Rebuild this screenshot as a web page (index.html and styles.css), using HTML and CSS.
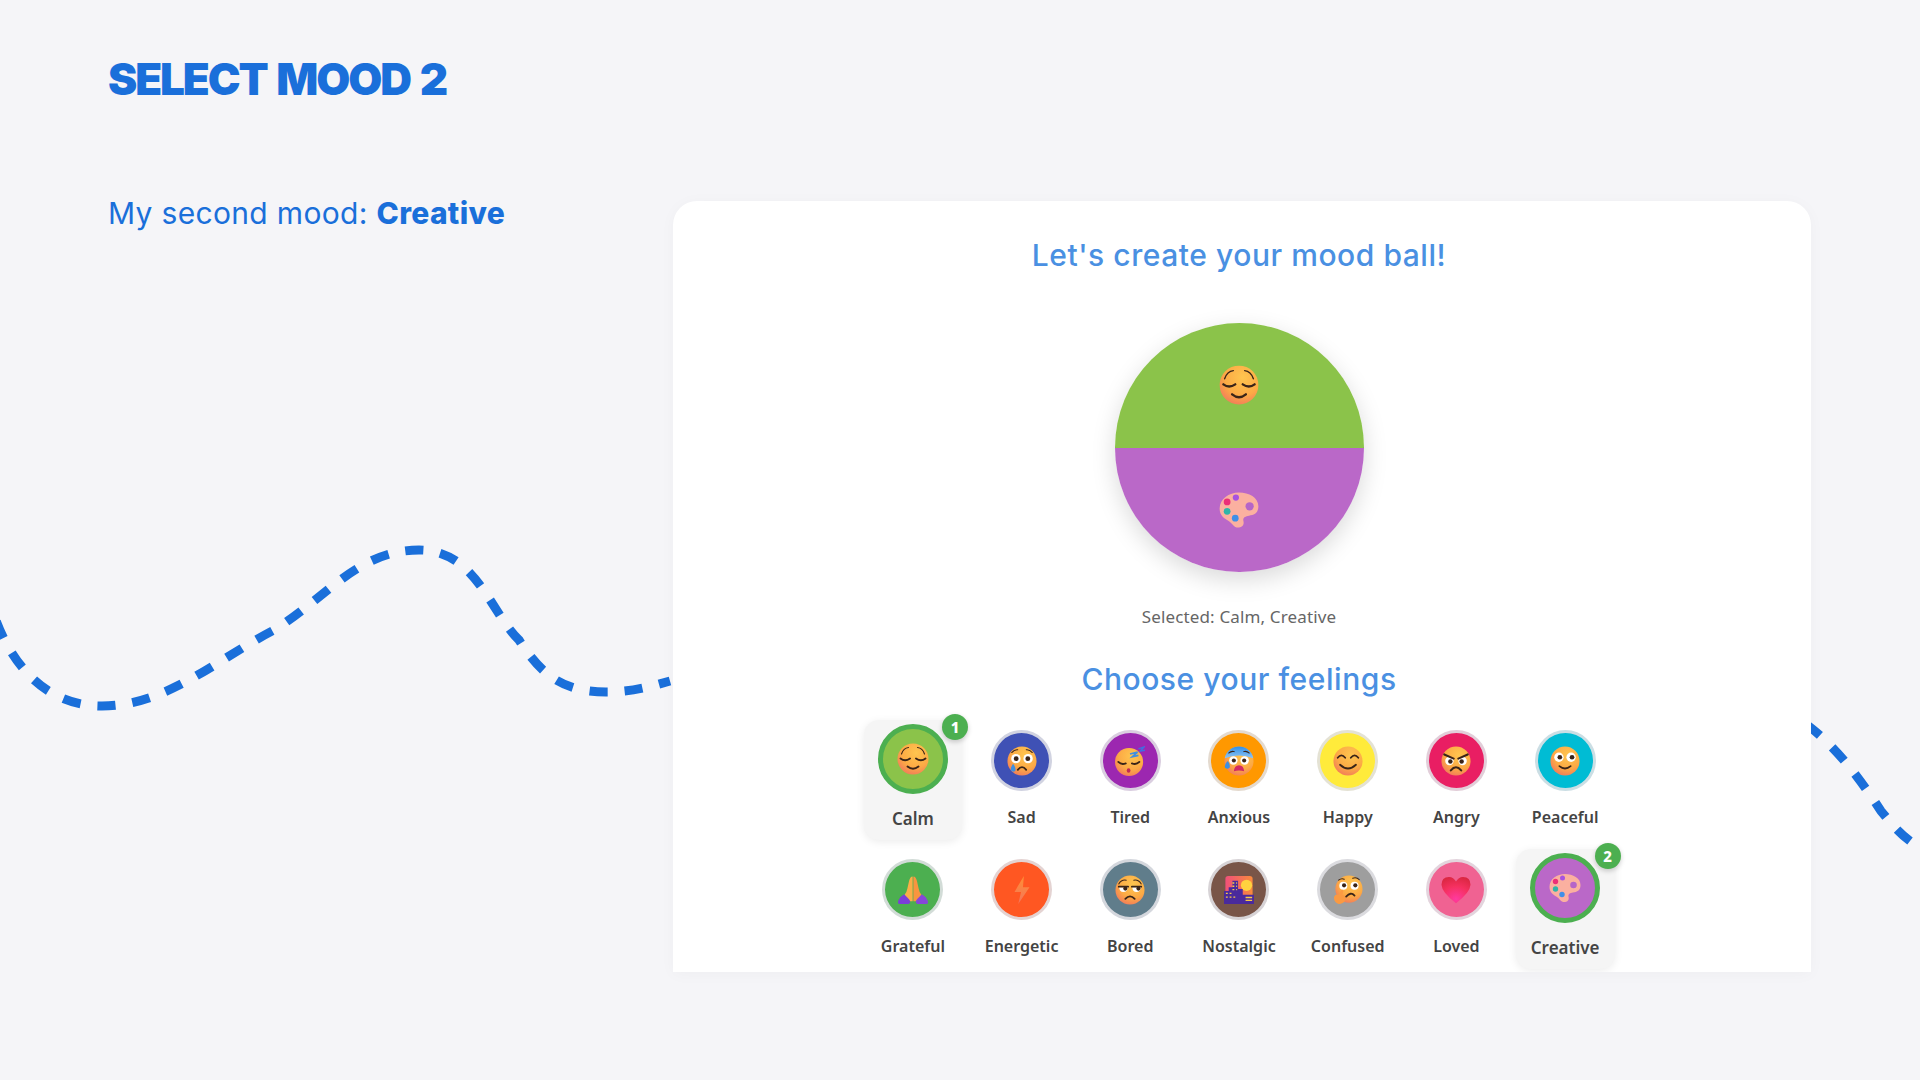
FILE: index.html
```html
<!DOCTYPE html>
<html lang="en">
<head>
<meta charset="utf-8">
<title>Select Mood 2</title>
<link rel="stylesheet" href="styles.css">
</head>
<body>
<svg class="defs" aria-hidden="true">
  <defs>
    <radialGradient id="face" cx=".6" cy=".3" r=".85">
      <stop offset="0" stop-color="#ffc54f"/><stop offset=".55" stop-color="#fcaa45"/><stop offset="1" stop-color="#ee6a62"/>
    </radialGradient>
    <linearGradient id="coldbrow" x1="0" y1="0" x2="0" y2="1">
      <stop offset="0" stop-color="#2f8fe8"/><stop offset="1" stop-color="#8fc4f2"/>
    </linearGradient>
    <linearGradient id="bolt" x1="0" y1="0" x2="0" y2="1">
      <stop offset="0" stop-color="#ff8f33"/><stop offset="1" stop-color="#f4745c"/>
    </linearGradient>
    <radialGradient id="heart" cx=".5" cy=".85" r=".9">
      <stop offset="0" stop-color="#ff3aa0"/><stop offset=".55" stop-color="#f5305f"/><stop offset="1" stop-color="#d8263f"/>
    </radialGradient>
    <linearGradient id="sky" x1="0" y1="0" x2="1" y2="0">
      <stop offset="0" stop-color="#f0507a"/><stop offset="1" stop-color="#f98a3c"/>
    </linearGradient>
    <symbol id="e-calm" viewBox="0 0 32 32">
      <circle cx="16" cy="16" r="15.5" fill="url(#face)"/>
      <path class="ln" d="M4.5 11Q6.500 5 11.500 4.500M27.500 11Q25.500 5 20.500 4.500"/>
      <path class="lnb" d="M3.500 15.500Q8 19 13 15.500M19 15.500Q24 19 28.500 15.500M10.500 23.500Q16 28 21.500 23.500"/>
    </symbol>
    <symbol id="e-sad" viewBox="0 0 32 32">
      <circle cx="16" cy="16" r="15.500" fill="url(#face)"/>
      <path class="ln" d="M5 7Q8 3.500 11.500 4M27 7Q24 3.500 20.500 4"/>
      <circle cx="9.500" cy="13.500" r="5" fill="#fff"/><circle cx="22.500" cy="13.500" r="5" fill="#fff"/>
      <circle cx="9.800" cy="13.500" r="2.600" fill="#3a2418"/><circle cx="22.200" cy="13.500" r="2.600" fill="#3a2418"/>
      <path class="lnb" d="M11.500 25.500Q16 19.500 20.500 25.500"/>
      <path d="M6.500 19Q3 24 4.500 26.500Q7 28.500 9 26Q9.500 23 6.500 19Z" fill="#3f8fe0"/>
    </symbol>
    <symbol id="e-tired" viewBox="0 0 32 32">
      <circle cx="15" cy="17" r="15" fill="url(#face)"/>
      <path class="lnb" d="M3.500 17Q7 20.500 11.500 18.500M18 18.500Q22.500 20.500 26 17"/>
      <ellipse cx="14.500" cy="26" rx="2" ry="2.400" fill="#c22a55"/>
      <path d="M16 8.500L24 6.500L18.500 11.500L25 10" fill="none" stroke="#3f8fe0" stroke-width="1.800"/>
      <path d="M25 3L31 1L27 5.500L32 4.500" fill="none" stroke="#3f6fe0" stroke-width="1.500"/>
    </symbol>
    <symbol id="e-anxious" viewBox="0 0 32 32">
      <circle cx="16" cy="16" r="15.500" fill="url(#face)"/>
      <path d="M.8 13A15.500 15.500 0 0 1 31.200 13Q16 7 .8 13Z" fill="url(#coldbrow)"/>
      <circle cx="10" cy="15.500" r="4.500" fill="#fff"/><circle cx="22" cy="15.500" r="4.500" fill="#fff"/>
      <circle cx="10.500" cy="15.500" r="2.200" fill="#3a2418"/><circle cx="21.500" cy="15.500" r="2.200" fill="#3a2418"/>
      <path d="M10.500 27Q11 20.500 16 20.500Q21 20.500 21.500 27Q16 25 10.500 27Z" fill="#d22a63"/>
      <path d="M4 16Q0 20 1 23Q3.500 25.500 6 23Q7 20 4 16Z" fill="#3f8fe0"/>
      <path class="ln" d="M5 7.500Q8 5 11 6M27 7.500Q24 5 21 6" stroke="#28508f"/>
    </symbol>
    <symbol id="e-happy" viewBox="0 0 32 32">
      <circle cx="16" cy="16" r="15.500" fill="url(#face)"/>
      <path class="lnb" d="M5 12.500Q9 7.500 13 12.500M19 12.500Q23 7.500 27 12.500M7.500 20Q16 28 24.500 20"/>
    </symbol>
    <symbol id="e-angry" viewBox="0 0 32 32">
      <circle cx="16" cy="16" r="15.500" fill="url(#face)"/>
      <circle cx="9" cy="16" r="4.500" fill="#fff"/><circle cx="23" cy="16" r="4.500" fill="#fff"/>
      <circle cx="10" cy="16.500" r="2.400" fill="#3a2418"/><circle cx="22" cy="16.500" r="2.400" fill="#3a2418"/>
      <path d="M3.500 9L13.500 13.500M28.500 9L18.500 13.500M10.500 26Q16 19.500 21.500 26" fill="none" stroke="#3a2418" stroke-width="2.200" stroke-linecap="round"/>
    </symbol>
    <symbol id="e-peaceful" viewBox="0 0 32 32">
      <circle cx="16" cy="16" r="15.500" fill="url(#face)"/>
      <circle cx="9.500" cy="12" r="5" fill="#fff"/><circle cx="22.500" cy="12" r="5" fill="#fff"/>
      <circle cx="10.500" cy="12" r="2.500" fill="#3a2418"/><circle cx="23.500" cy="12" r="2.500" fill="#3a2418"/>
      <path class="lnb" d="M10 21.500Q16 26.500 22 21.500"/>
    </symbol>
    <symbol id="e-grateful" viewBox="0 0 32 32">
      <path d="M15.600 1.500Q12.800 1.500 11.800 6.500L10 14.500Q9.400 18.500 7 21L11 28H15.600Z" fill="#fbae48"/>
      <path d="M16.400 1.500Q19.200 1.500 20.200 6.500L22 14.500Q22.600 18.500 25 21L21 28H16.400Z" fill="#f9953f"/>
      <path d="M6.500 20.500L11.500 25.500Q14.500 29 11.500 31H2Q-1 31 .5 27Q2 23 6.500 20.500Z" fill="#7b3fd8"/>
      <path d="M25.500 20.500L20.500 25.500Q17.500 29 20.500 31H30Q33 31 31.500 27Q30 23 25.500 20.500Z" fill="#8648d8"/>
    </symbol>
    <symbol id="e-energetic" viewBox="0 0 32 32">
      <path d="M18 1L8 18H15L12 31L24 13H17Z" fill="url(#bolt)"/>
    </symbol>
    <symbol id="e-bored" viewBox="0 0 32 32">
      <circle cx="16" cy="16" r="15.500" fill="url(#face)"/>
      <path class="ln" d="M4 9.500Q7 4.500 12 5.500M28 9.500Q25 4.500 20 5.500"/>
      <path d="M4.500 13H13.500Q13.500 18 9 18Q4.500 18 4.500 13ZM18.500 13H27.500Q27.500 18 23 18Q18.500 18 18.500 13Z" fill="#fff"/>
      <circle cx="11" cy="14.500" r="2.200" fill="#3a2418"/><circle cx="25" cy="14.500" r="2.200" fill="#3a2418"/>
      <path class="lnb" d="M4 12.500H14M18 12.500H28M11 25.500Q16 20 21 25.500"/>
    </symbol>
    <symbol id="e-nostalgic" viewBox="0 0 32 32">
      <rect x="1.500" y="1" width="29" height="30" rx="3" fill="url(#sky)"/>
      <circle cx="24" cy="11" r="6" fill="#ffd23f"/>
      <path d="M0 31V17H5V13H9V6H15V15H20V21H32V31Z" fill="#4a2a9c"/>
      <path d="M9 8.500H11M13 8.500H14M9 12H11M13 12H14M9 15.500H11M13 15.500H14M2 19.500H4M6 19.500H8M2 23.500H4M6 23.500H8M10 23.500H12M23 24H30M23 27H30" stroke="#f7c948" stroke-width="1.400" fill="none"/>
    </symbol>
    <symbol id="e-confused" viewBox="0 0 32 32">
      <circle cx="17" cy="15" r="14.500" fill="url(#face)"/>
      <path class="ln" d="M6 5.500Q9 3 12 4.500M21 3.500Q25 2 28 5"/>
      <circle cx="11" cy="11.500" r="4.300" fill="#fff"/><circle cx="23" cy="11.500" r="4.300" fill="#fff"/>
      <circle cx="11.800" cy="11" r="2.200" fill="#3a2418"/><circle cx="23.800" cy="11" r="2.200" fill="#3a2418"/>
      <path class="lnb" d="M14 23Q19 17.500 23 22"/>
      <path d="M1 24Q2 20 6 21L9 16Q11 15 11 18L10 21Q14 23 13 27Q11 31 6 31Q1 29 1 24Z" fill="#fb9a42"/>
    </symbol>
    <symbol id="e-loved" viewBox="0 0 32 32">
      <path d="M16 30Q1 19 .5 10.500Q.5 2 8.500 2Q13.500 2 16 7Q18.500 2 23.500 2Q31.500 2 31.500 10.500Q31 19 16 30Z" fill="url(#heart)"/>
    </symbol>
    <symbol id="e-creative" viewBox="0 0 32 32">
      <path d="M16 2C8 2 .5 7 .5 15C.5 21 5 23 8 25C11 27 12 30.500 16 30C20 29.500 20 26.500 19.500 24.500C19 22 21 21 24 20.500C28 20 31.500 18.500 31.500 13C31.500 6 24 2 16 2Z" fill="#fbb0a0"/>
      <circle cx="24.500" cy="13" r="3.300" fill="#b565c8"/>
      <circle cx="6.500" cy="9.500" r="2.700" fill="#ec2f78"/>
      <circle cx="13.500" cy="6" r="2.500" fill="#a852e0"/>
      <circle cx="6.500" cy="17" r="2.700" fill="#2fb5a8"/>
      <circle cx="13" cy="22.500" r="2.700" fill="#3f8fe8"/>
    </symbol>
  </defs>
</svg>

<svg class="wave" viewBox="0 0 1920 1080" aria-hidden="true">
  <path class="wave-left" d="M-6 615C6 650 36 706 102 706C166 706 216 660 274 630C326 598 358 550 419 550C476 550 490 612 519 640C542 676 564 692 606 692C632 692 652 686 670 681"/>
  <path d="M1806 724C1838 748 1862 782 1881 811C1890 822 1898 832 1910 841"/>
</svg>

<main class="page">
  <h1 class="title">SELECT MOOD 2</h1>
  <div class="columns">
    <p class="subtitle">My second mood: <strong>Creative</strong></p>
    <section class="card">
      <h2 class="card-title">Let's create your mood ball!</h2>
      <div class="ball">
        <div class="half half-calm"><svg class="ball-emoji"><use href="#e-calm"/></svg></div>
        <div class="half half-creative"><svg class="ball-emoji"><use href="#e-creative"/></svg></div>
      </div>
      <p class="selected-text">Selected: Calm, Creative</p>
      <h3 class="feelings-title">Choose your feelings</h3>
      <div class="grid">
        <div class="item is-selected"><span class="badge">1</span><div class="circle c-calm"><svg class="emoji"><use href="#e-calm"/></svg></div><span class="label">Calm</span></div>
        <div class="item"><div class="circle c-sad"><svg class="emoji"><use href="#e-sad"/></svg></div><span class="label">Sad</span></div>
        <div class="item"><div class="circle c-tired"><svg class="emoji"><use href="#e-tired"/></svg></div><span class="label">Tired</span></div>
        <div class="item"><div class="circle c-anxious"><svg class="emoji"><use href="#e-anxious"/></svg></div><span class="label">Anxious</span></div>
        <div class="item"><div class="circle c-happy"><svg class="emoji"><use href="#e-happy"/></svg></div><span class="label">Happy</span></div>
        <div class="item"><div class="circle c-angry"><svg class="emoji"><use href="#e-angry"/></svg></div><span class="label">Angry</span></div>
        <div class="item"><div class="circle c-peaceful"><svg class="emoji"><use href="#e-peaceful"/></svg></div><span class="label">Peaceful</span></div>
        <div class="item"><div class="circle c-grateful"><svg class="emoji"><use href="#e-grateful"/></svg></div><span class="label">Grateful</span></div>
        <div class="item"><div class="circle c-energetic"><svg class="emoji"><use href="#e-energetic"/></svg></div><span class="label">Energetic</span></div>
        <div class="item"><div class="circle c-bored"><svg class="emoji"><use href="#e-bored"/></svg></div><span class="label">Bored</span></div>
        <div class="item"><div class="circle c-nostalgic"><svg class="emoji"><use href="#e-nostalgic"/></svg></div><span class="label">Nostalgic</span></div>
        <div class="item"><div class="circle c-confused"><svg class="emoji"><use href="#e-confused"/></svg></div><span class="label">Confused</span></div>
        <div class="item"><div class="circle c-loved"><svg class="emoji"><use href="#e-loved"/></svg></div><span class="label">Loved</span></div>
        <div class="item is-selected"><span class="badge">2</span><div class="circle c-creative"><svg class="emoji"><use href="#e-creative"/></svg></div><span class="label">Creative</span></div>
      </div>
    </section>
  </div>
</main>
</body>
</html>
```
FILE: styles.css
```css
* { box-sizing: border-box; }
html, body { margin: 0; height: 1080px; overflow: hidden; }
body { background: #f5f5f8; position: relative; font-family: "Noto Sans", sans-serif; }

.defs { position: absolute; width: 0; height: 0; }
.ln { fill: none; stroke: #3a2418; stroke-width: 1.1; stroke-linecap: round; }
.lnb { fill: none; stroke: #3a2418; stroke-width: 1.9; stroke-linecap: round; }

.wave { position: absolute; left: 0; top: 0; width: 1920px; height: 1080px; }
.wave path { fill: none; stroke: #1a6fda; stroke-width: 9; stroke-dasharray: 18 17; }
.wave .wave-left { stroke-dashoffset: -7; }

.page { position: relative; padding: 0 109px 0 108px; }
.title {
  margin: 0;
  padding-top: 50px;
  height: 201px;
  font-family: Inter, sans-serif;
  font-weight: 900;
  font-size: 44px;
  line-height: 58px;
  letter-spacing: -2.1px;
  word-spacing: 3px;
  color: #1a6fda;
}
.columns { display: flex; }
.subtitle {
  margin: -6px 0 0;
  width: 565px;
  flex: none;
  font-family: Inter, sans-serif;
  font-size: 30px;
  line-height: 36px;
  letter-spacing: .33px;
  color: #1a6fda;
}
.subtitle strong { font-weight: 800; }

.card {
  flex: 1;
  height: 771px;
  overflow: hidden;
  background: #fff;
  border-radius: 24px 24px 0 0;
  box-shadow: 0 2px 16px rgba(0, 0, 0, .03);
  padding: 32px 6px 0 0;
  display: flex;
  flex-direction: column;
  align-items: center;
}
.card-title, .feelings-title {
  margin: 0;
  font-family: Inter, sans-serif;
  font-weight: 500;
  font-size: 30px;
  line-height: 44px;
  letter-spacing: .55px;
  color: #4a90e2;
}
.ball {
  margin-top: 46px;
  width: 249px;
  height: 249px;
  flex: none;
  border-radius: 50%;
  box-shadow: 0 8px 24px rgba(0, 0, 0, .15);
  display: flex;
  flex-direction: column;
}
.half { height: 124.5px; display: flex; align-items: center; justify-content: center; }
.half-calm { background: #8bc34a; border-radius: 125px 125px 0 0; }
.half-creative { background: #ba68c8; border-radius: 0 0 125px 125px; }
.ball-emoji { width: 40px; height: 40px; }

.selected-text {
  margin: 33px 0 0;
  font-family: "Noto Sans", sans-serif;
  font-size: 17px;
  line-height: 24px;
  letter-spacing: .15px;
  color: #666;
}
.feelings-title { margin-top: 28px; }

.grid {
  margin-top: 19px;
  width: 751px;
  flex: none;
  display: grid;
  grid-template-columns: repeat(7, 1fr);
  grid-auto-rows: 120px;
  gap: 9px 10px;
}
.item {
  position: relative;
  display: flex;
  flex-direction: column;
  align-items: center;
  padding-top: 10px;
  border-radius: 15px;
}
.circle {
  width: 61px;
  height: 61px;
  border-radius: 50%;
  border: 3px solid rgba(225, 225, 230, .9);
  display: flex;
  align-items: center;
  justify-content: center;
  flex: none;
}
.emoji { width: 30px; height: 30px; }
.label {
  margin-top: 15px;
  font-size: 16px;
  line-height: 22px;
  font-weight: 600;
  color: #444;
}
.is-selected {
  background: #f5f5f5;
  box-shadow: 0 2px 8px rgba(0, 0, 0, .08);
  padding-top: 4px;
}
.is-selected .circle { width: 70px; height: 70px; border: 5px solid #4caf50; }
.is-selected .emoji { width: 32px; height: 32px; }
.is-selected .label { margin-top: 14px; font-size: 17px; }
.badge {
  position: absolute;
  top: -6px;
  right: -6px;
  width: 26px;
  height: 26px;
  border-radius: 50%;
  background: #4caf50;
  color: #fff;
  font-size: 15px;
  font-weight: 800;
  line-height: 26px;
  text-align: center;
  box-shadow: 0 2px 5px rgba(0, 0, 0, .2);
}

.c-calm { background: #8bc34a; }
.c-sad { background: #3f51b5; }
.c-tired { background: #9c27b0; }
.c-anxious { background: #ff9800; }
.c-happy { background: #ffeb3b; }
.c-angry { background: #e91e63; }
.c-peaceful { background: #00bcd4; }
.c-grateful { background: #4caf50; }
.c-energetic { background: #ff5722; }
.c-bored { background: #607d8b; }
.c-nostalgic { background: #795548; }
.c-confused { background: #9e9e9e; }
.c-loved { background: #f06292; }
.c-creative { background: #ba68c8; }
```
